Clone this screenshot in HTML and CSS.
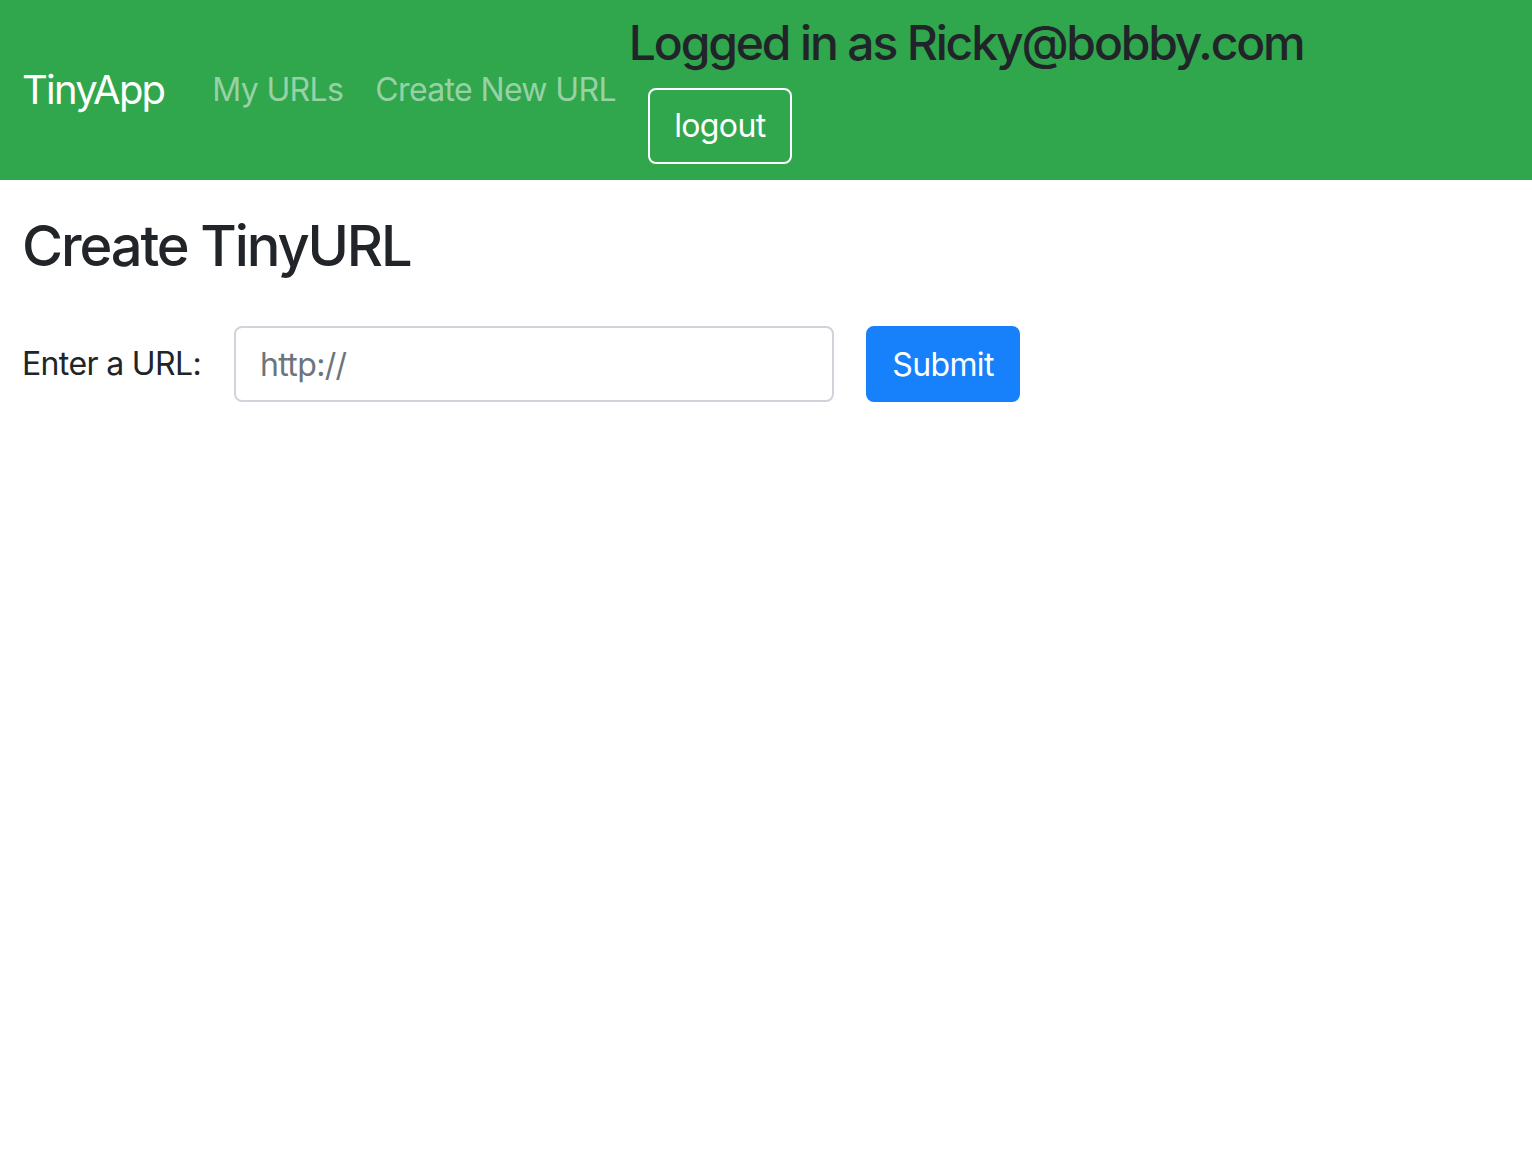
FILE: index.html
```html
<!DOCTYPE html>
<html lang="en">
<head>
<meta charset="utf-8">
<title>TinyApp</title>
<link rel="stylesheet" href="styles.css">
</head>
<body>
<nav class="navbar">
  <a class="brand" href="#">TinyApp</a>
  <ul class="nav-links">
    <li><a class="nav-link" href="#">My URLs</a></li>
    <li><a class="nav-link" href="#">Create New URL</a></li>
  </ul>
  <div class="user-block">
    <h4 class="user-title">Logged in as Ricky@bobby.com</h4>
    <form class="logout-form">
      <button type="button" class="btn-logout">logout</button>
    </form>
  </div>
</nav>
<main class="main">
  <h3 class="page-title">Create TinyURL</h3>
  <form class="url-form">
    <label class="url-label" for="longURL">Enter a URL:</label>
    <input class="url-input" id="longURL" type="text" placeholder="http://">
    <button type="button" class="btn-submit">Submit</button>
  </form>
</main>
</body>
</html>
```

FILE: styles.css
```css
* { box-sizing: border-box; }
html, body { margin: 0; padding: 0; }
body {
  font-family: Inter, "Noto Sans", "Liberation Sans", sans-serif;
  font-size: 32px;
  line-height: 1.5;
  letter-spacing: -0.02em;
  color: #212529;
  background: #ffffff;
}
.navbar {
  display: flex;
  align-items: center;
  height: 180px;
  padding: 16px 22px;
  background: #30a64d;
}
.brand {
  color: #ffffff;
  text-decoration: none;
  font-size: 40px;
  line-height: 1.5;
  letter-spacing: -0.045em;
  margin-right: 32px;
}
.nav-links {
  display: flex;
  list-style: none;
  margin: 0;
  padding: 0;
}
.nav-link {
  display: block;
  padding: 0 16px;
  color: rgba(255, 255, 255, 0.5);
  text-decoration: none;
}
.user-block {
  display: flex;
  flex-direction: column;
  align-items: flex-start;
  margin-left: -3px;
  align-self: flex-start;
}
.user-title {
  margin: -2px 0 16px;
  font-size: 48px;
  font-weight: 500;
  line-height: 1.2;
  letter-spacing: -0.045em;
  color: #212529;
}
.logout-form { margin: 0 0 0 19px; }
.btn-logout {
  width: 144px;
  height: 76px;
  padding: 0;
  font-family: inherit;
  font-size: 32px;
  letter-spacing: -0.02em;
  color: #ffffff;
  background: transparent;
  border: 2px solid #ffffff;
  border-radius: 8px;
  cursor: pointer;
}
.main {
  padding: 33px 22px;
}
.page-title {
  margin: 0 0 46px;
  font-size: 56px;
  font-weight: 500;
  line-height: 1.2;
  letter-spacing: -0.038em;
}
.url-form {
  display: flex;
  align-items: center;
}
.url-label {
  margin-right: 33px;
}
.url-input {
  width: 600px;
  height: 76px;
  padding: 0 24px;
  font-family: inherit;
  font-size: 32px;
  letter-spacing: -0.02em;
  color: #495057;
  border: 2px solid #d0d4da;
  border-radius: 8px;
  outline: none;
}
.url-input::placeholder { color: #6c757d; }
.btn-submit {
  margin-left: 32px;
  width: 154px;
  height: 76px;
  padding: 0;
  font-family: inherit;
  font-size: 32px;
  letter-spacing: -0.02em;
  color: #ffffff;
  background: #1780fb;
  border: 0;
  border-radius: 8px;
  cursor: pointer;
}
```
